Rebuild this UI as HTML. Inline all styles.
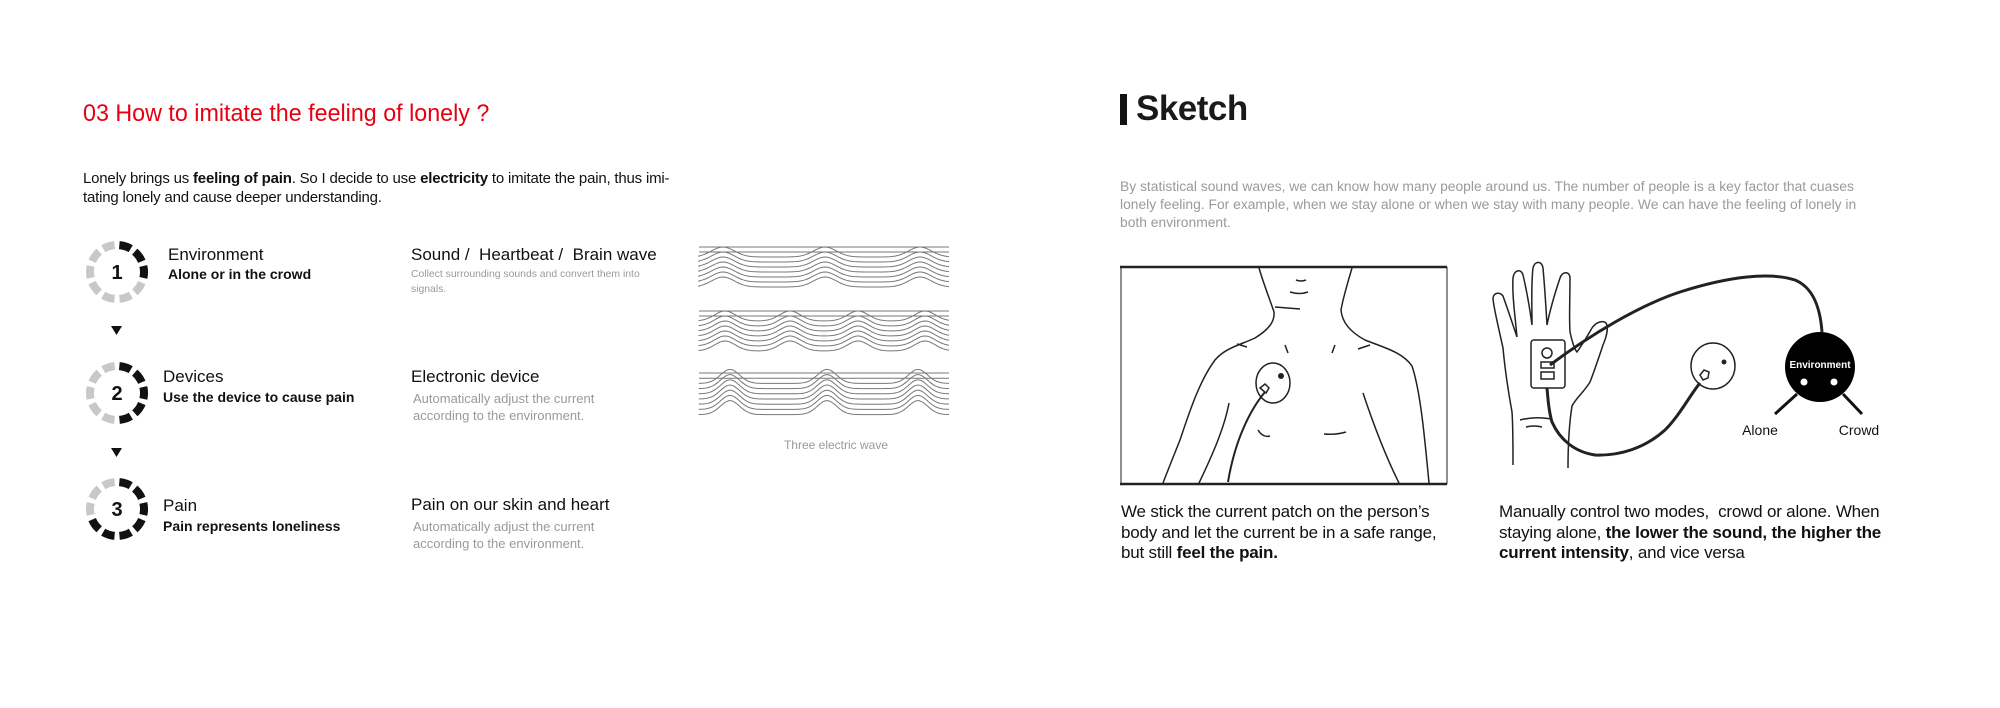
<!DOCTYPE html>
<html><head><meta charset="utf-8"><style>
body{margin:0;width:2000px;height:708px;background:#fff;position:relative;overflow:hidden;font-family:"Liberation Sans",sans-serif;color:#111}
.a{position:absolute;white-space:nowrap}
.t{font-size:17px;color:#111}
.b{font-size:14px;font-weight:bold;color:#111}
.g{color:#9a9a9a}
</style></head><body>
<div class="a" style="left:83px;top:100px;font-size:24px;color:#e60012;transform:scaleX(0.97);transform-origin:0 0">03 How to imitate the feeling of lonely ?</div>
<div class="a" style="left:83px;top:169px;font-size:15px;line-height:19px;letter-spacing:-0.2px">Lonely brings us <b>feeling of pain</b>. So I decide to use <b>electricity</b> to imitate the pain, thus imi-<br>tating lonely and cause deeper understanding.</div>

<div class="a t" style="left:168px;top:245px">Environment</div>
<div class="a b" style="left:168px;top:266px">Alone or in the crowd</div>
<div class="a t" style="left:163px;top:367px">Devices</div>
<div class="a b" style="left:163px;top:389px">Use the device to cause pain</div>
<div class="a t" style="left:163px;top:496px">Pain</div>
<div class="a b" style="left:163px;top:518px">Pain represents loneliness</div>

<div class="a t" style="left:411px;top:245px">Sound /&nbsp; Heartbeat /&nbsp; Brain wave</div>
<div class="a g" style="left:411px;top:267px;font-size:10.4px;line-height:15px">Collect surrounding sounds and convert them into<br>signals.</div>
<div class="a t" style="left:411px;top:367px">Electronic device</div>
<div class="a g" style="left:413px;top:390px;font-size:13px;line-height:17px">Automatically adjust the current<br>according to the environment.</div>
<div class="a t" style="left:411px;top:495px">Pain on our skin and heart</div>
<div class="a g" style="left:413px;top:518px;font-size:13px;line-height:17px">Automatically adjust the current<br>according to the environment.</div>
<div class="a g" style="left:776px;top:438px;font-size:12px;width:120px;text-align:center">Three electric wave</div>

<div class="a" style="left:1120px;top:94px;width:7px;height:31px;background:#111"></div>
<div class="a" style="left:1136px;top:89px;font-size:35px;font-weight:bold;color:#1a1a1a;letter-spacing:-0.5px">Sketch</div>
<div class="a g" style="left:1120px;top:177px;font-size:13.85px;line-height:18px">By statistical sound waves, we can know how many people around us. The number of people is a key factor that cuases<br>lonely feeling. For example, when we stay alone or when we stay with many people. We can have the feeling of lonely in<br>both environment.</div>
<div class="a" style="left:1121px;top:502px;font-size:17px;line-height:20.5px;letter-spacing:-0.2px">We stick the current patch on the person’s<br>body and let the current be in a safe range,<br>but still <b>feel the pain.</b></div>
<div class="a" style="left:1499px;top:502px;font-size:17px;line-height:20.5px;letter-spacing:-0.2px">Manually control two modes,&nbsp; crowd or alone. When<br>staying alone, <b>the lower the sound, the higher the<br>current intensity</b>, and vice versa</div>

<svg class="a" style="left:0;top:0" width="2000" height="708" viewBox="0 0 2000 708">
<g fill="none" stroke-width="8">
 <g transform="translate(117,272)"><circle r="27" stroke="#c8c8c8" stroke-dasharray="12 4.96" transform="rotate(-85)"/><circle r="27" stroke="#111" stroke-dasharray="12 4.96 12 4.96 12 200" transform="rotate(-85)"/></g>
 <g transform="translate(117,393)"><circle r="27" stroke="#c8c8c8" stroke-dasharray="12 4.96" transform="rotate(-85)"/><circle r="27" stroke="#111" stroke-dasharray="12 4.96 12 4.96 12 4.96 12 4.96 12 200" transform="rotate(-85)"/></g>
 <g transform="translate(117,509)"><circle r="27" stroke="#c8c8c8" stroke-dasharray="12 4.96" transform="rotate(-85)"/><circle r="27" stroke="#111" stroke-dasharray="12 4.96 12 4.96 12 4.96 12 4.96 12 4.96 12 4.96 12 200" transform="rotate(-85)"/></g>
</g>
<g font-family="Liberation Sans" font-weight="bold" font-size="20" fill="#111" text-anchor="middle">
 <text x="117" y="279">1</text><text x="117" y="400">2</text><text x="117" y="516">3</text>
</g>
<path d="M111 326h11l-5.5 9z M111 448h11l-5.5 9z" fill="#111"/>
<g id="waves" fill="none" stroke="#777" stroke-width="1"></g>

<g fill="none" stroke="#222">
 <path d="M1120 267H1447" stroke-width="2.5"/><path d="M1120 484H1447" stroke-width="2.5"/>
 <path d="M1121 267V484M1447 267V484" stroke-width="1"/>
 <g stroke-width="1.5">
 <path d="M1259 268C1264 285 1270 300 1274 312C1275 322 1268 330 1255 338C1240 345 1225 348 1215 360C1200 380 1190 410 1180 440C1172 460 1166 475 1163 483"/>
 <path d="M1352 268C1347 285 1343 298 1341 310C1342 322 1350 332 1365 340C1385 348 1402 352 1412 366C1420 390 1424 430 1429 483"/>
 <path d="M1229 403C1224 430 1210 460 1199 483M1363 393C1372 420 1385 455 1399 483"/>
 <path d="M1275 307L1300 309M1296 280q5 2 10 0M1290 292q10 3 18 0"/>
 <path d="M1237 344l10 3M1370 345l-12 4M1285 345l3 8M1335 345l-3 8M1258 430q5 8 12 6M1324 434q12 1 22-2"/>
 <ellipse cx="1273" cy="383" rx="17" ry="20"/>
 <path d="M1265 392C1250 410 1235 440 1228 482" stroke-width="2"/>
 </g>
 <circle cx="1281" cy="376" r="2.5" fill="#222"/>
 <path d="M1260 388l5-4 4 4-3 5z" stroke-width="1.5"/>
</g>

<g fill="none" stroke="#222" stroke-width="1.5">
 <path d="M1513 465C1513 440 1513 425 1512 412C1508 390 1505 370 1503 348C1498 325 1493 305 1493 298C1494 292 1500 292 1503 296C1508 310 1513 325 1517 337M1517 337C1515 315 1512 295 1513 278C1514 270 1521 268 1523 275C1527 292 1530 310 1532 325M1532 325C1532 305 1531 285 1533 268C1535 260 1542 261 1543 268C1545 290 1546 308 1547 325M1547 325C1551 305 1556 290 1560 278C1562 271 1570 271 1570 278C1570 300 1569 318 1570 332C1572 342 1575 350 1577 352C1582 345 1588 335 1592 328C1596 322 1603 320 1606 323C1609 328 1606 338 1603 345C1598 360 1594 372 1590 382C1584 392 1576 398 1572 406C1569 425 1568 450 1568 468"/>
 <path d="M1520 420q15-4 32-1M1526 427q8-2 16 0"/>
 <rect x="1531" y="340" width="34" height="48" rx="3"/>
 <circle cx="1547" cy="353" r="5"/>
 <rect x="1541" y="362" width="13" height="6"/><rect x="1541" y="372" width="13" height="7"/>
 <path d="M1550 365C1590 335 1640 305 1680 292C1730 276 1770 272 1795 280C1812 287 1820 305 1822 332" stroke-width="3"/>
 <path d="M1547 388C1548 400 1549 412 1552 422C1560 440 1575 452 1595 455C1620 456 1645 448 1665 430C1680 415 1690 395 1700 383" stroke-width="3"/>
 <ellipse cx="1713" cy="366" rx="22" ry="23"/>
 <path d="M1700 375l4-5 5 2-1 6-5 2z"/>
</g>
<circle cx="1724" cy="362" r="2.5" fill="#222"/>
<circle cx="1820" cy="367" r="35" fill="#000"/>
<text x="1820" y="368" font-family="Liberation Sans" font-weight="bold" font-size="10" fill="#fff" text-anchor="middle">Environment</text>
<circle cx="1804" cy="382" r="3.5" fill="#fff"/><circle cx="1834" cy="382" r="3.5" fill="#fff"/>
<path d="M1797 394L1775 414M1843 394L1862 414" stroke="#111" stroke-width="3"/>
<g font-family="Liberation Sans" font-size="14" fill="#111" text-anchor="middle"><text x="1760" y="435">Alone</text><text x="1859" y="435">Crowd</text></g>
</svg>
<script>
(function(){
var g=document.getElementById('waves'),s='';
function blk(y0,bumps,h,n,sp,w){
 for(var i=0;i<n;i++){
  var y=y0+i*sp, hh=(i<2?0:h), d='M699 '+y.toFixed(1);
  for(var x=699;x<=950;x+=2){
   var v=0;for(var k=0;k<bumps.length;k++){var t=(x-bumps[k])/w;v+=Math.exp(-t*t*2.2);}
   d+=' L'+x+' '+(y-hh*v).toFixed(2);
  }
  s+='<path d="'+d+'"/>';
 }
}
blk(247,[723,825,920],10,9,5,24);
blk(311,[725,790,858,925],10,9,5,22);
blk(373,[730,827,918],14,9,5.2,20);
g.innerHTML=s;
})();
</script>
</body></html>
